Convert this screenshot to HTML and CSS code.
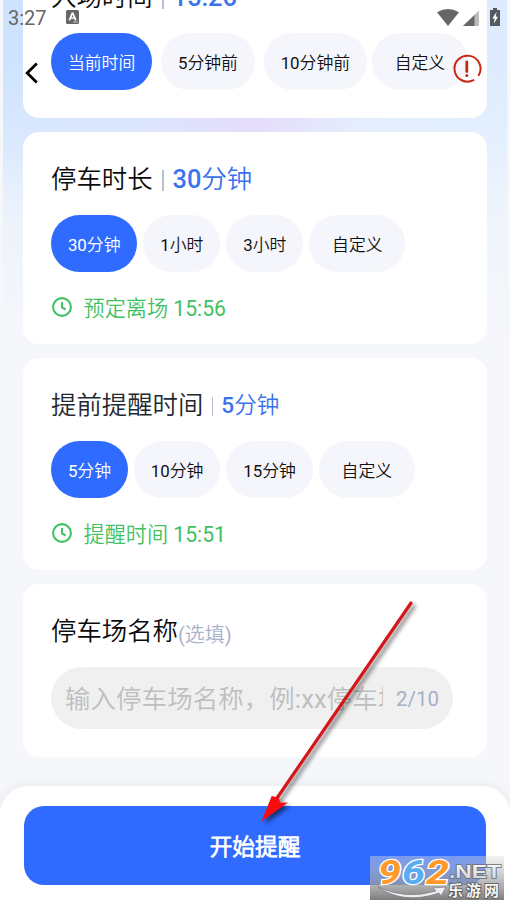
FILE: index.html
```html
<!DOCTYPE html>
<html lang="zh-CN">
<head>
<meta charset="utf-8">
<title>停车提醒</title>
<link rel="stylesheet" href="styles.css">
</head>
<body>
<div class="screen">
  <main class="cards">
    <section class="card card-entry">
      <h2 class="title">入场时间<i class="bar"></i><b>15:26</b></h2>
      <div class="chips chips-entry">
        <button class="chip active">当前时间</button>
        <button class="chip">5分钟前</button>
        <button class="chip">10分钟前</button>
        <button class="chip wide">自定义</button>
      </div>
    </section>
    <section class="card">
      <h2 class="title">停车时长<i class="bar"></i><b>30分钟</b></h2>
      <div class="chips">
        <button class="chip active">30分钟</button>
        <button class="chip">1小时</button>
        <button class="chip">3小时</button>
        <button class="chip wide">自定义</button>
      </div>
      <p class="result"><svg class="clock" viewBox="0 0 20 20"><circle cx="10" cy="10" r="8.9"/><path d="M10 5v5.4l3.6 2.1"/></svg><span>预定离场 15:56</span></p>
    </section>
    <section class="card">
      <h2 class="title title-small">提前提醒时间<i class="bar"></i><b>5分钟</b></h2>
      <div class="chips">
        <button class="chip active">5分钟</button>
        <button class="chip">10分钟</button>
        <button class="chip">15分钟</button>
        <button class="chip wide">自定义</button>
      </div>
      <p class="result"><svg class="clock" viewBox="0 0 20 20"><circle cx="10" cy="10" r="8.9"/><path d="M10 5v5.4l3.6 2.1"/></svg><span>提醒时间 15:51</span></p>
    </section>
    <section class="card card-name">
      <h2 class="title">停车场名称<small>(选填)</small></h2>
      <div class="field"><span class="placeholder">输入停车场名称，例:xx停车场</span><span class="count">2/10</span></div>
    </section>
  </main>
  <footer class="footer"><button class="start">开始提醒</button></footer>

  <div class="status">
    <span class="time">3:27</span>
    <svg class="status-app" viewBox="0 0 13 14"><rect width="13" height="14" rx="1.5" fill="#666"/><path d="M3.3 10.3 6.2 3.4h.7l2.9 6.9M4.5 8h4" fill="none" stroke="#fff" stroke-width="1.7"/><path d="M7 12h5" stroke="#ddd" stroke-width=".8"/></svg>
    <svg class="status-icons" viewBox="0 0 64 20"><path d="M0 4.200Q11 -2.200 22 4.200L11 18Z" fill="#666"/><path d="M26 18 42 2.500V18Z" fill="#bbb"/><path d="M26 18 37.500 6.900V18Z" fill="#666"/><path d="M53 2h3V0h4v2h3v16H53Z" fill="#555960"/><path d="m59.500 4-4.200 6.500h2.300L57 15.500l4-6.700h-2.200Z" fill="#fff"/></svg>
  </div>
  <svg class="back" viewBox="0 0 14 22"><path d="M11.800 1.500 2.200 11l9.600 9.500"/></svg>
  <svg class="alert" viewBox="0 0 30 30"><path d="M21.500 26.200A13 13 0 1 1 26.800 21.100" /><path class="mark" d="M14.800 8v9.500"/><circle cx="14.800" cy="21.500" r="1.500"/></svg>

  <svg class="arrow" viewBox="0 0 170 236">
    <path class="shaft" d="M151 13 15 211"/>
    <path class="head" d="M1.500 231.500 11.700 206l6.700 1.700 2 5 7.500-.2Z"/>
  </svg>

  <svg class="watermark" viewBox="0 0 134 44">
    <defs>
      <linearGradient id="shade" x1="0" y1="0" x2="0" y2="1"><stop offset="0" stop-color="#ddd" stop-opacity=".42"/><stop offset="1" stop-color="#777" stop-opacity=".95"/></linearGradient>
      <linearGradient id="silver" x1="0" y1="0" x2="0" y2="1"><stop offset="0" stop-color="#fff"/><stop offset="1" stop-color="#ccc"/></linearGradient>
    </defs>
    <rect width="134" height="44" fill="url(#shade)"/>
    <path class="swoosh" d="M8 31Q36 44 66 35L63 32 76 31 71 40 69 37Q34 49 8 31Z"/>
    <g class="digits"><text x="8" y="28" textLength="23" lengthAdjust="spacingAndGlyphs" fill="#ff9928">9</text><text x="32" y="28" textLength="23" lengthAdjust="spacingAndGlyphs" fill="#58acf1">6</text><text x="56" y="28" textLength="23" lengthAdjust="spacingAndGlyphs" fill="#ff9928">2</text></g>
    <text class="net" x="79" y="22" textLength="52" lengthAdjust="spacingAndGlyphs">.NET</text>
    <text class="site" x="78" y="39.500" textLength="51">乐游网</text>
  </svg>
</div>
</body>
</html>
```
FILE: styles.css
```css
* { box-sizing: border-box; }
body { margin: 0; font-family: Roboto, "Noto Sans CJK SC DemiLight", "Noto Sans CJK SC", sans-serif; }
button { border: 0; padding: 0; font: inherit; }

.screen {
  position: relative;
  width: 510px;
  height: 906px;
  overflow: hidden;
  display: flex;
  flex-direction: column;
  background:
    linear-gradient(#f5f7fb, #f5f7fb) 0 0 / 3px 100% no-repeat,
    linear-gradient(#f5f7fb, #f5f7fb) 100% 0 / 3px 100% no-repeat,
    linear-gradient(rgba(245,247,251,0) 60px, rgba(245,247,251,.3) 140px, rgba(245,247,251,.8) 220px, #f5f7fb 340px),
    linear-gradient(90deg, #cee3ff, #d3e2ff 25%, #e0d4fc 50%, #deeafd 70%, #dcecfe);
}

.cards { display: flex; flex-direction: column; gap: 14px; padding: 0 23px; margin-top: -50px; }
.card { height: 212px; flex: none; padding: 30px 28px 0; border-radius: 16px; background: #fff; }
.card-entry { height: 168px; }
.card-name { height: 173px; }

.title {
  display: flex;
  align-items: center;
  height: 34px;
  margin: 0;
  color: #0b0b0b;
  font-size: 25.4px;
  font-weight: 400;
  line-height: 36px;
  white-space: nowrap;
}
.title b { color: #3b73ed; font-weight: 500; font-family: Roboto, "Noto Sans CJK SC DemiLight", "Noto Sans CJK SC"; }
.bar { width: 2px; height: 21px; margin: 3px 9px 0 9px; background: #b9c0d2; }
.title-small { color: #242831; }
.title-small b { margin: 1px 0 0 -1px; font-size: 22.600px; }
.title-small .bar { width: 1px; height: 19px; }
.title small { margin-top: 7px; color: #a9b2c9; font-size: 20px; }

.chips { display: flex; gap: 6px; margin-top: 19px; }
.chip {
  flex: none;
  height: 57px;
  padding: 2px 16.900px 0;
  border-radius: 29px;
  background: #f5f6fb;
  color: #111;
  font-size: 16.850px;
  font-weight: 400;
  line-height: 56px;
  white-space: nowrap;
}
.chip.wide { padding: 2px 22.800px 0; }
.chip.active { background: #2f6bff; color: #fff; }
.chips-entry { gap: 8.900px; }
.chips-entry .wide { margin-left: -4px; }

.result { display: flex; align-items: center; height: 30px; margin: 20px 0 0; color: #42c162; font-size: 21.150px; white-space: nowrap; }
.result span { margin-top: -2px; }
.clock { width: 20px; height: 20px; margin: -1px 11.500px 0 1px; fill: none; stroke: #42c162; stroke-width: 2.100; }

.field { display: flex; align-items: center; width: 402px; height: 62px; margin-top: 19px; padding: 0 14px; border-radius: 31px; background: #f0f0f0; }
.placeholder { width: 318px; margin-top: -2px; overflow: hidden; color: #bebebe; font-size: 25.400px; letter-spacing: .15px; white-space: nowrap; }
.count { margin: 2px 0 0 auto; color: #a6afc8; font-size: 20.500px; }

.footer { position: absolute; left: 0; bottom: 0; width: 510px; height: 120px; padding: 20px 24px; border-radius: 28px 28px 0 0; background: #fff; box-shadow: 0 0 12px rgba(50,60,70,.09); }
.start { display: block; width: 100%; height: 79px; padding-top: 2px; border-radius: 20px; background: #2f6bff; color: #fff; font-size: 22.700px; font-weight: 700; line-height: 79px; }

.status { position: absolute; top: 7px; left: 8px; right: 9px; display: flex; align-items: center; height: 21px; color: #666; }
.time { font-size: 20px; line-height: 21px; margin-top: 1px; }
.status-app { width: 13px; height: 14px; margin: -2px 0 0 19px; }
.status-icons { width: 64px; height: 20px; margin-left: auto; }
.back { position: absolute; left: 25px; top: 62px; width: 14px; height: 22px; fill: none; stroke: #000; stroke-width: 2.800; }
.alert { position: absolute; left: 452px; top: 54px; width: 30px; height: 30px; fill: none; stroke: #c92614; stroke-width: 2; stroke-linecap: round; }
.alert .mark { stroke-width: 2.800; }
.alert circle { fill: #c92614; stroke: none; }

.arrow { position: absolute; left: 260px; top: 590px; width: 170px; height: 236px; filter: drop-shadow(3px 3px 2px rgba(0,0,0,.55)); }
.shaft { fill: none; stroke: #d4171b; stroke-width: 3.200; stroke-linecap: round; }
.head { fill: #fa0b0d; }

.watermark { position: absolute; left: 370px; top: 856px; width: 134px; height: 44px; }
.digits { font: italic 700 34px Roboto, sans-serif; stroke: #fff; stroke-width: 2.500; paint-order: stroke; }
.net { fill: url(#silver); stroke: #686e7b; stroke-width: 1.500; paint-order: stroke; font: 700 19px "Liberation Sans", sans-serif; }
.site { fill: #f4f4f4; stroke: #555; stroke-width: 1.500; paint-order: stroke; font: 700 15px "Noto Sans CJK SC", sans-serif; }
.swoosh { fill: #eee; stroke: #747b88; stroke-width: .7; }
```
